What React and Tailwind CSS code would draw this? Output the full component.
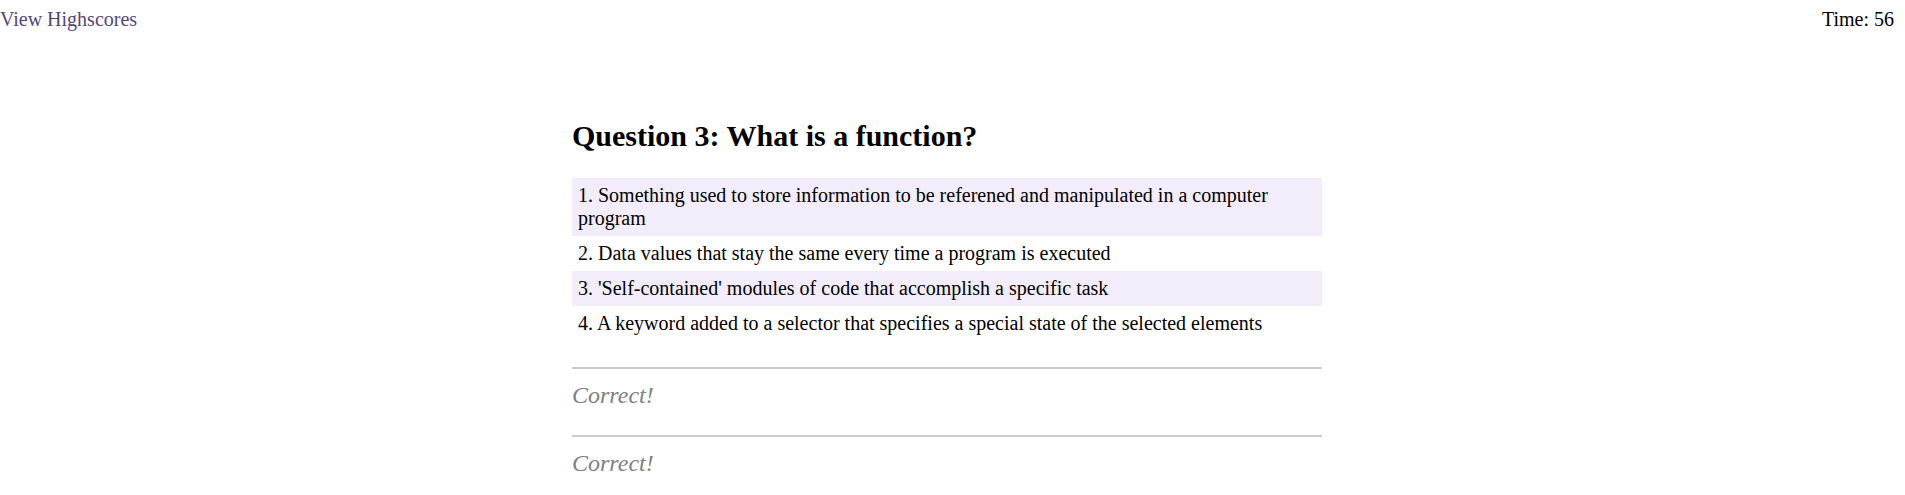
const ANSWERS = [
  '1. Something used to store information to be referened and manipulated in a computer program',
  '2. Data values that stay the same every time a program is executed',
  "3. 'Self-contained' modules of code that accomplish a specific task",
  '4. A keyword added to a selector that specifies a special state of the selected elements',
];

export default function App() {
  return (
    <div className="min-h-[495px] bg-white text-[20px] leading-[1.149] text-black font-['Liberation_Serif','Times_New_Roman',serif]">
      <header className="flex justify-between pt-[8px] pr-[11px]">
        <a href="#" className="text-[#564677]">View Highscores</a>
        <span>Time: 56</span>
      </header>

      <main className="ml-[572px] w-[750px] pt-[88px]">
        <h2 className="text-[30px] font-bold leading-[1.149] mb-[25px]">Question 3: What is a function?</h2>
        <ol>
          {ANSWERS.map((a, i) => (
            <li
              key={i}
              className={`px-[6px] py-[6px] leading-[23px] ${i % 2 === 0 ? 'bg-[#f3edfb]' : ''}`}
            >
              {a}
            </li>
          ))}
        </ol>
        <div className="mt-[26px] border-t-2 border-[#cccccc] pt-[13px]">
          <p className="italic text-[24px] leading-[1.149] text-[#808080]">Correct!</p>
        </div>
        <div className="mt-[25px] border-t-2 border-[#cccccc] pt-[13px]">
          <p className="italic text-[24px] leading-[1.149] text-[#808080]">Correct!</p>
        </div>
      </main>
    </div>
  );
}
